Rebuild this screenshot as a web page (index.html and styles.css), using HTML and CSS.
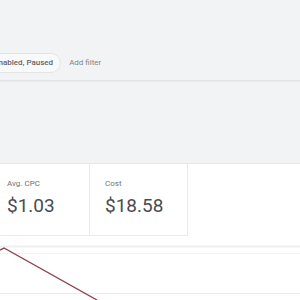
FILE: index.html
```html
<!DOCTYPE html>
<html lang="en">
<head>
    <meta charset="UTF-8">
    <meta name="viewport" content="width=device-width, initial-scale=1.0">
    <title>Campaigns overview</title>
    <link rel="stylesheet" href="styles.css">
</head>
<body>
    <div class="filter-bar">
        <div class="filter-row">
            <span class="chip">Enabled, Paused</span>
            <span class="add-filter">Add filter</span>
        </div>
    </div>

    <div class="gray-area"></div>

    <div class="card">
        <div class="scorecards">
            <div class="scorecard">
                <div class="score-label">Avg. CPC</div>
                <div class="score-value">$1.03</div>
            </div>
            <div class="scorecard">
                <div class="score-label">Cost</div>
                <div class="score-value">$18.58</div>
            </div>
        </div>

        <svg class="chart" width="300" height="64" viewBox="0 0 300 64">
            <line x1="0" y1="10.5" x2="300" y2="10.5" stroke="#eeeff0" stroke-width="2"/>
            <line x1="0" y1="17.5" x2="300" y2="17.5" stroke="#f3f3f3" stroke-width="1"/>
            <line x1="0" y1="57.5" x2="300" y2="57.5" stroke="#ececec" stroke-width="1"/>
            <polyline points="-2,15 4,12 97,64" fill="none" stroke="#8d4452" stroke-width="1.4"/>
        </svg>
    </div>
</body>
</html>
```

FILE: styles.css
```css
* {
    box-sizing: border-box;
    margin: 0;
    padding: 0;
}

body {
    font-family: 'Roboto', 'Liberation Sans', sans-serif;
    background-color: #f1f3f4;
    width: 300px;
    height: 300px;
    overflow: hidden;
}

.filter-bar {
    height: 81px;
    padding-top: 53px;
    border-bottom: 1px solid #e2e3e5;
    box-shadow: 0 1px 1px rgba(0,0,0,0.03);
}

.filter-row {
    display: flex;
    align-items: center;
    gap: 8px;
    margin-left: -15px;
}

.chip {
    height: 20px;
    line-height: 18px;
    padding: 0 7px 0 8px;
    border: 1px solid #e3e4e6;
    border-radius: 10px;
    background-color: #f8f9fa;
    color: #5f6368;
    font-size: 8px;
    font-weight: 500;
    white-space: nowrap;
}

.add-filter {
    color: #80868b;
    font-size: 8px;
    line-height: 20px;
}

.gray-area {
    height: 82px;
}

.card {
    background-color: white;
    border-top: 1px solid #e6e7e9;
}

.scorecards {
    display: flex;
    margin-left: -8px;
}

.scorecard {
    width: 98px;
    height: 72px;
    padding: 15px 0 0 15px;
    border-right: 1px solid #ebebeb;
    border-bottom: 1px solid #ebebeb;
}

.score-label {
    color: #6f7377;
    font-size: 8px;
    line-height: 10px;
}

.score-value {
    margin-top: 6px;
    color: #4a4d50;
    font-size: 19px;
    line-height: 22px;
}

.chart {
    display: block;
}
```
